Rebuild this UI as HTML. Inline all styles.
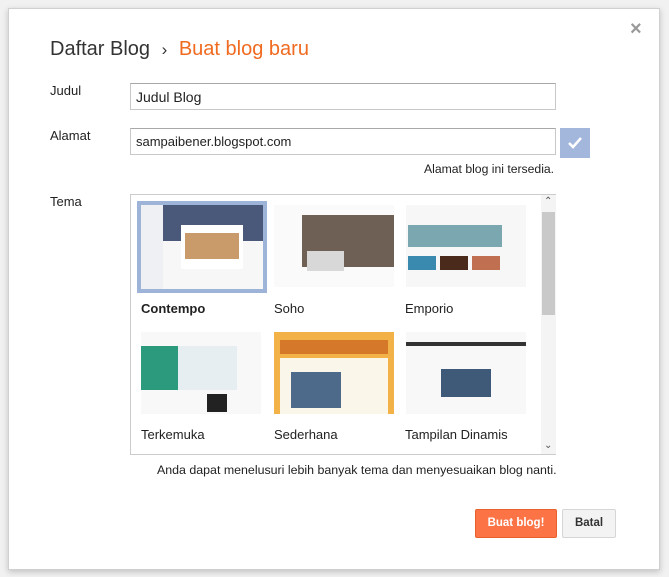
<!DOCTYPE html>
<html><head><meta charset="utf-8"><style>
body{margin:0;width:669px;height:577px;background:#f1f1f1;font-family:"Liberation Sans",Arial,sans-serif;position:relative;overflow:hidden}
.dlg{position:absolute;left:8px;top:8px;width:650px;height:560px;background:#fff;border:1px solid #d0d0d0;box-shadow:0 2px 6px rgba(0,0,0,.2)}
.a{position:absolute}
.lbl{font-size:13px;color:#222}
.inp{position:absolute;border:1px solid #c8c8c8;border-top-color:#a8a8a8;height:27px;box-sizing:border-box;font-size:14px;padding:5px 5px;color:#222}
.th{position:absolute;width:120px;height:82px;background:#f4f4f4;overflow:hidden}
.name{position:absolute;font-size:13px;color:#222}
</style></head><body>
<div class="dlg"></div>
<div class="a" style="left:630px;top:18px;font-size:20px;color:#999;font-weight:bold">×</div>
<div class="a" style="left:50px;top:38px;font-size:20px;color:#333">Daftar Blog <span style="margin:0 6px;font-size:17px">›</span> <span style="color:#f06a1f">Buat blog baru</span></div>
<div class="a lbl" style="left:50px;top:83px">Judul</div>
<div class="inp" style="left:130px;top:83px;width:426px">Judul Blog</div>
<div class="a lbl" style="left:50px;top:128px">Alamat</div>
<div class="inp" style="left:130px;top:128px;width:426px;font-size:13px">sampaibener.blogspot.com</div>
<div class="a" style="left:560px;top:128px;width:30px;height:30px;background:#a3b7dd"><svg width="30" height="30"><path d="M9 15l4 4 8-9" stroke="#fff" stroke-width="2.5" fill="none"/></svg></div>
<div class="a" style="left:424px;top:162px;font-size:12.2px;color:#222">Alamat blog ini tersedia.</div>
<div class="a lbl" style="left:50px;top:194px">Tema</div>
<div class="a" style="left:130px;top:194px;width:426px;height:261px;border:1px solid #ccc;box-sizing:border-box"></div>
<div class="a" style="left:541px;top:195px;width:15px;height:259px;background:#f4f4f4"></div>
<div class="a" style="left:542px;top:212px;width:13px;height:103px;background:#c9c9c9"></div>
<div class="a" style="left:544px;top:196px;font-size:10px;color:#555">⌃</div>
<div class="a" style="left:544px;top:440px;font-size:10px;color:#555">⌄</div>
<div class="a" style="left:137px;top:201px;width:130px;height:92px;background:#9eb3d8"></div>
<div class="th" style="left:141px;top:205px;width:122px;height:84px;background:#f7f7f7"><div class="a" style="left:22px;top:0;width:100px;height:36px;background:#4a587a"></div><div class="a" style="left:0;top:0;width:22px;height:84px;background:#eef0f4"></div><div class="a" style="left:40px;top:20px;width:62px;height:44px;background:#fff"></div><div class="a" style="left:44px;top:28px;width:54px;height:26px;background:#c99a6a"></div></div>
<div class="th" style="left:274px;top:205px;background:#fafafa"><div class="a" style="left:28px;top:10px;width:92px;height:52px;background:#6f6055"></div><div class="a" style="left:33px;top:46px;width:37px;height:20px;background:#d8d8d8"></div></div>
<div class="th" style="left:406px;top:205px;background:#f7f7f7"><div class="a" style="left:2px;top:20px;width:94px;height:22px;background:#7aa7b0"></div><div class="a" style="left:2px;top:51px;width:28px;height:14px;background:#3a8ab0"></div><div class="a" style="left:34px;top:51px;width:28px;height:14px;background:#4a2a1a"></div><div class="a" style="left:66px;top:51px;width:28px;height:14px;background:#c07050"></div></div>
<div class="name" style="left:141px;top:301px;font-weight:bold">Contempo</div>
<div class="name" style="left:274px;top:301px">Soho</div>
<div class="name" style="left:405px;top:301px">Emporio</div>
<div class="th" style="left:141px;top:332px;background:#f8f8f8"><div class="a" style="left:0;top:14px;width:96px;height:44px;background:#e6eef2"></div><div class="a" style="left:0;top:14px;width:37px;height:44px;background:#2c9a7d"></div><div class="a" style="left:66px;top:62px;width:20px;height:18px;background:#222"></div></div>
<div class="th" style="left:274px;top:332px;background:#f3b247"><div class="a" style="left:6px;top:8px;width:108px;height:14px;background:#d5782a"></div><div class="a" style="left:6px;top:26px;width:108px;height:56px;background:#fbf6ea"></div><div class="a" style="left:17px;top:40px;width:50px;height:36px;background:#4e6a8a"></div></div>
<div class="th" style="left:406px;top:332px;background:#f8f8f8"><div class="a" style="left:0;top:10px;width:120px;height:4px;background:#333"></div><div class="a" style="left:35px;top:37px;width:50px;height:28px;background:#3f5a78"></div></div>
<div class="name" style="left:141px;top:427px">Terkemuka</div>
<div class="name" style="left:274px;top:427px">Sederhana</div>
<div class="name" style="left:405px;top:427px">Tampilan Dinamis</div>
<div class="a" style="left:157px;top:463px;font-size:12.4px;color:#222">Anda dapat menelusuri lebih banyak tema dan menyesuaikan blog nanti.</div>
<div class="a" style="left:475px;top:509px;width:82px;height:29px;background:#fc7446;border:1px solid #e8602e;box-sizing:border-box;color:#fff;font-weight:bold;font-size:11.5px;text-align:center;line-height:27px;border-radius:2px">Buat blog!</div>
<div class="a" style="left:562px;top:509px;width:54px;height:29px;background:#f3f3f3;border:1px solid #d6d6d6;box-sizing:border-box;color:#333;font-weight:bold;font-size:11.5px;text-align:center;line-height:27px;border-radius:2px">Batal</div>
</body></html>
